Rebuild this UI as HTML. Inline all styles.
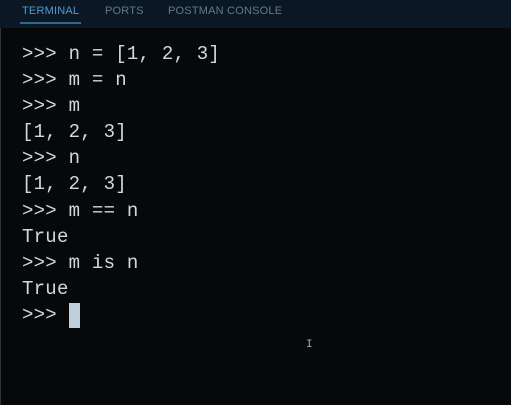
<!DOCTYPE html>
<html><head><style>
body{margin:0;width:511px;height:405px;background:#070809;overflow:hidden;position:relative;font-family:"Liberation Sans",sans-serif}
.hdr{position:absolute;left:0;top:0;width:511px;height:28px;background:#0b1824}
.tab{position:absolute;top:5px;font-size:11px;color:#5f7a90;letter-spacing:.2px}
.ul{position:absolute;left:20px;top:22px;width:61px;height:2px;background:#2f6a95}
.term{position:absolute;left:22px;top:41px;font-family:"Liberation Mono",monospace;font-size:19px;letter-spacing:0.25px;line-height:26.1px;color:#d4d8dc;white-space:pre}
.cur{position:absolute;left:69px;top:303px;width:11px;height:25px;background:#c0cfdc}
.edge{position:absolute;left:0;top:28px;width:1px;height:377px;background:#333}
</style></head><body>
<div class="hdr">
<div class="tab" style="left:22px;color:#4d9bd6">TERMINAL</div>
<div class="tab" style="left:105px">PORTS</div>
<div class="tab" style="left:168px">POSTMAN CONSOLE</div>
<div class="ul"></div>
</div>
<div class="edge"></div>
<div class="term">&gt;&gt;&gt; n = [1, 2, 3]
&gt;&gt;&gt; m = n
&gt;&gt;&gt; m
[1, 2, 3]
&gt;&gt;&gt; n
[1, 2, 3]
&gt;&gt;&gt; m == n
True
&gt;&gt;&gt; m is n
True
&gt;&gt;&gt;</div>
<div class="cur"></div>
<div style="position:absolute;left:306px;top:339px;color:#aaa;font-size:11px;font-family:'Liberation Mono',monospace">I</div>
</body></html>
